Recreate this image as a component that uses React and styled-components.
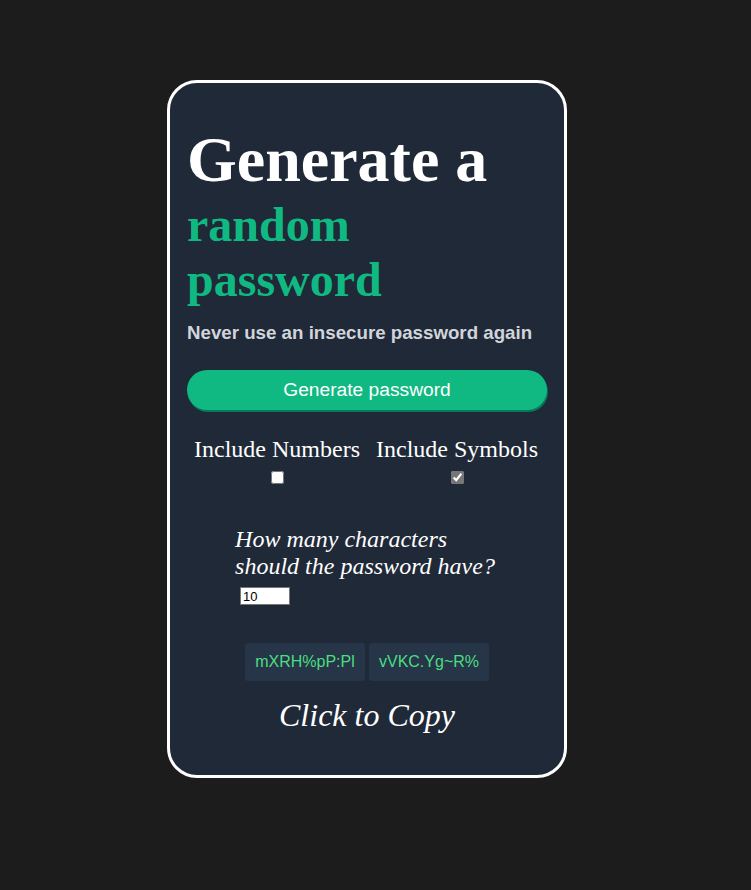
import React, { useState } from "react";
import styled, { createGlobalStyle } from "styled-components";

const GlobalStyle = createGlobalStyle`
  html, body {
    margin: 0;
    background: #1c1c1c;
  }
  body {
    font-family: "Liberation Serif", "Times New Roman", serif;
  }
`;

const App = () => {
  const [numbers, setNumbers] = useState(false);
  const [symbols, setSymbols] = useState(true);
  const [length, setLength] = useState(10);
  const passwords = ["mXRH%pP:Pl", "vVKC.Yg~R%"];

  return (
    <Page>
      <GlobalStyle />
      <Card>
        <Title>
          Generate a
          <Accent>random password</Accent>
        </Title>
        <Subtitle>Never use an insecure password again</Subtitle>
        <GenerateButton type='button'>Generate password</GenerateButton>
        <Options>
          <Option>
            <OptionLabel>Include Numbers</OptionLabel>
            <Checkbox
              type='checkbox'
              checked={numbers}
              onChange={(e) => setNumbers(e.target.checked)}
            />
          </Option>
          <Option>
            <OptionLabel>Include Symbols</OptionLabel>
            <Checkbox
              type='checkbox'
              checked={symbols}
              onChange={(e) => setSymbols(e.target.checked)}
            />
          </Option>
        </Options>
        <LengthSection>
          <LengthBox>
            <Question>
              How many characters
              <br />
              should the password have?
            </Question>
            <LengthInput
              type='text'
              value={length}
              onChange={(e) => setLength(e.target.value)}
            />
          </LengthBox>
        </LengthSection>
        <Results>
          {passwords.map((p) => (
            <PasswordBox key={p}>{p}</PasswordBox>
          ))}
        </Results>
        <CopyHint>Click to Copy</CopyHint>
      </Card>
    </Page>
  );
};

export default App;

const Page = styled.div`
  padding: 80px 0 112px 167px;
`;

const Card = styled.div`
  box-sizing: border-box;
  width: 400px;
  height: 698px;
  padding: 40px 17px 0 17px;
  background: #1f2937;
  border: 3px solid #ffffff;
  border-radius: 30px;
`;

const Title = styled.h1`
  margin: 0;
  color: #ffffff;
  font-family: "Liberation Serif", "Times New Roman", serif;
  font-weight: bold;
  font-size: 64px;
  line-height: 74px;
`;

const Accent = styled.span`
  display: block;
  color: #10b981;
  font-size: 48px;
  line-height: 55px;
`;

const Subtitle = styled.h3`
  margin: 15px 0 0;
  color: #d1d5db;
  font-family: "Liberation Sans", Arial, sans-serif;
  font-weight: bold;
  font-size: 18.72px;
  line-height: 22px;
`;

const GenerateButton = styled.button`
  display: block;
  width: 360px;
  height: 40px;
  margin-top: 26px;
  border: none;
  border-radius: 20px;
  background: #10b981;
  box-shadow: 1px 2px 0 #047857;
  color: #ffffff;
  font-family: "Liberation Sans", Arial, sans-serif;
  font-size: 19.2px;
  cursor: pointer;
`;

const Options = styled.div`
  display: grid;
  grid-template-columns: 1fr 1fr;
  margin-top: 25px;
`;

const Option = styled.label`
  display: flex;
  flex-direction: column;
  align-items: center;
`;

const OptionLabel = styled.span`
  color: #ffffff;
  font-size: 24px;
  line-height: 28px;
`;

const Checkbox = styled.input`
  width: 13px;
  height: 13px;
  margin: 8px 0 0;
  accent-color: #767676;
`;

const LengthSection = styled.div`
  display: flex;
  justify-content: center;
  margin-top: 42px;
`;

const LengthBox = styled.div`
  display: flex;
  flex-direction: column;
  align-items: flex-start;
  padding-right: 4px;
`;

const Question = styled.p`
  margin: 0;
  color: #ffffff;
  font-style: italic;
  font-size: 24px;
  line-height: 27px;
`;

const LengthInput = styled.input`
  box-sizing: border-box;
  width: 50px;
  height: 18px;
  margin: 7px 0 0 5px;
  padding: 0 2px;
  border: 1px solid #767676;
  font-family: "Liberation Sans", Arial, sans-serif;
  font-size: 13px;
`;

const Results = styled.div`
  display: flex;
  justify-content: center;
  gap: 4px;
  margin-top: 38px;
`;

const PasswordBox = styled.div`
  width: 120px;
  height: 38px;
  display: flex;
  align-items: center;
  justify-content: center;
  background: #273549;
  border-radius: 3px;
  color: #4ade80;
  font-family: "Liberation Sans", Arial, sans-serif;
  font-size: 16px;
  cursor: pointer;
`;

const CopyHint = styled.p`
  margin: 16px 0 0;
  text-align: center;
  color: #ffffff;
  font-style: italic;
  font-size: 32px;
  line-height: 37px;
`;
